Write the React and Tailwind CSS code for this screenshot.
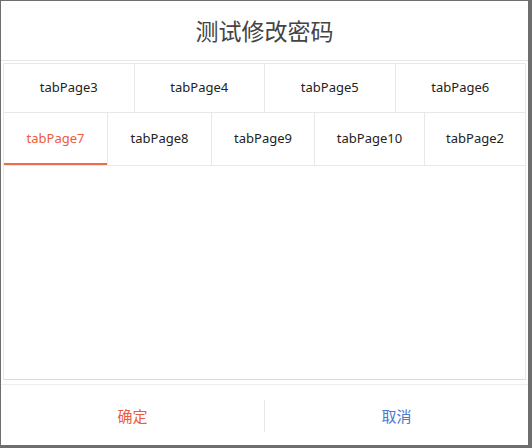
import React from "react";

const row1 = ["tabPage3", "tabPage4", "tabPage5", "tabPage6"];
const row2 = [
  { t: "tabPage7", w: "w-[104px]", active: true },
  { t: "tabPage8", w: "w-[104px]" },
  { t: "tabPage9", w: "w-[103px]" },
  { t: "tabPage10", w: "w-[110px]" },
  { t: "tabPage2", w: "flex-1" },
];

export default function App() {
  const font = { fontFamily: '"Noto Sans", "Noto Sans CJK SC", sans-serif' };
  return (
    <div className="w-[532px] h-[448px] bg-[#6e6e6e] pt-px pl-px pr-[4px] pb-[3px]" style={font}>
      <div className="w-full h-full bg-white flex flex-col">
        <div className="h-[60px] pt-[2px] flex items-center justify-center text-[23px] text-[#444] border-b border-[#e6e6e6] shrink-0">
          测试修改密码
        </div>
        <div className="flex-1 flex flex-col mx-[2px] mt-[2px] border-x border-[#e8e8e8] border-b border-b-[#dcdcdc]">
          <div className="flex h-[50px] border-t border-b border-[#e8e8e8] shrink-0">
            {row1.map((t, i) => (
              <div
                key={t}
                className={`flex-1 flex items-center justify-center text-[13px] text-[#222] ${i < 3 ? "border-r border-[#e8e8e8]" : ""}`}
              >
                {t}
              </div>
            ))}
          </div>
          <div className="flex h-[53px] border-b border-[#e8e8e8] shrink-0">
            {row2.map((x, i) => (
              <div
                key={x.t}
                className={`${x.w} relative flex items-center justify-center text-[13px] ${x.active ? "text-[#ee5a3c]" : "text-[#222]"} ${i < 4 ? "border-r border-[#e8e8e8]" : ""}`}
              >
                {x.t}
                {x.active && <div className="absolute left-0 right-0 bottom-0 h-[2px] bg-[#ec6a4e]" />}
              </div>
            ))}
          </div>
          <div className="flex-1" />
        </div>
        <div className="h-[61px] mt-[4px] pt-[2px] border-t border-[#eeeeee] flex items-center shrink-0">
          <div className="flex-1 flex items-center justify-center text-[15px] text-[#ee5a3c]">确定</div>
          <div className="w-px h-[32px] bg-[#e6e6e6]" />
          <div className="flex-1 flex items-center justify-center text-[15px] text-[#4a78d2]">取消</div>
        </div>
      </div>
    </div>
  );
}
